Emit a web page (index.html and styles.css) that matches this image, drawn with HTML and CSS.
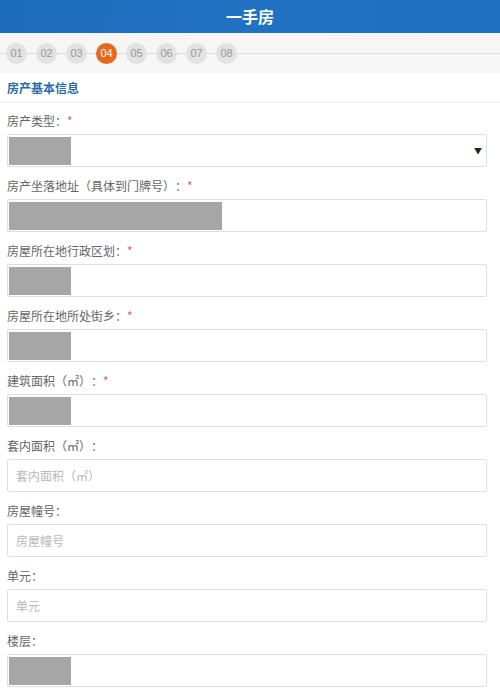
FILE: index.html
```html
<!DOCTYPE html>
<html lang="zh-CN">
<head>
    <meta charset="UTF-8">
    <meta name="viewport" content="width=device-width, initial-scale=1.0">
    <title>一手房</title>
    <link rel="stylesheet" href="styles.css">
</head>
<body>
    <header class="top-bar">一手房</header>

    <div class="steps">
        <span class="step">01</span>
        <span class="step">02</span>
        <span class="step">03</span>
        <span class="step active">04</span>
        <span class="step">05</span>
        <span class="step">06</span>
        <span class="step">07</span>
        <span class="step">08</span>
    </div>

    <div class="section-title">房产基本信息</div>

    <form class="form">
        <div class="field">
            <label>房产类型：<em>*</em></label>
            <div class="box select"><span class="mask"></span><span class="arrow">▼</span></div>
        </div>
        <div class="field">
            <label>房产坐落地址（具体到门牌号）：<em>*</em></label>
            <div class="box"><span class="mask wide"></span></div>
        </div>
        <div class="field">
            <label>房屋所在地行政区划：<em>*</em></label>
            <div class="box"><span class="mask"></span></div>
        </div>
        <div class="field">
            <label>房屋所在地所处街乡：<em>*</em></label>
            <div class="box"><span class="mask"></span></div>
        </div>
        <div class="field">
            <label>建筑面积（㎡）：<em>*</em></label>
            <div class="box"><span class="mask"></span></div>
        </div>
        <div class="field">
            <label>套内面积（㎡）：</label>
            <input class="box" type="text" placeholder="套内面积（㎡）">
        </div>
        <div class="field">
            <label>房屋幢号：</label>
            <input class="box" type="text" placeholder="房屋幢号">
        </div>
        <div class="field">
            <label>单元：</label>
            <input class="box" type="text" placeholder="单元">
        </div>
        <div class="field">
            <label>楼层：</label>
            <div class="box"><span class="mask"></span></div>
        </div>
    </form>
</body>
</html>
```

FILE: styles.css
```css
/* Global */
body {
    margin: 0;
    font-family: "Noto Sans CJK SC", "Noto Sans", sans-serif;
    font-size: 12px;
    color: #666;
    background: #fff;
    text-spacing-trim: space-all;
}

/* Header */
.top-bar {
    height: 33px;
    line-height: 33px;
    text-align: center;
    font-size: 16px;
    font-weight: bold;
    color: #fff;
    background: linear-gradient(100deg, #1d6bbb, #2272c3 50%, #1f6fc0);
}

/* Steps */
.steps {
    height: 40px;
    display: flex;
    align-items: center;
    gap: 9px;
    padding-left: 6px;
    background: #f6f6f6 linear-gradient(#dcdcdc, #dcdcdc) no-repeat 0 20px / 100% 1px;
}

.step {
    width: 21px;
    height: 21px;
    line-height: 21px;
    border-radius: 50%;
    background: #e2e2e2;
    color: #999;
    font-family: "Liberation Sans", Arial, sans-serif;
    font-size: 11px;
    text-align: center;
}

.step.active {
    background: #e8681c;
    color: #fff;
}

/* Section */
.section-title {
    height: 29px;
    line-height: 30px;
    padding-left: 7px;
    font-weight: bold;
    color: #2b6cae;
    border-bottom: 1px solid #ececec;
}

/* Form */
.form {
    padding: 8px 13px 0 7px;
}

.field {
    margin-bottom: 9px;
}

.field label {
    display: block;
    height: 20px;
    line-height: 20px;
    margin-bottom: 3px;
    color: #666;
}

.field label em {
    font-style: normal;
    color: #e06060;
}

.box {
    box-sizing: border-box;
    display: flex;
    align-items: center;
    width: 480px;
    height: 33px;
    margin: 0;
    padding: 1px;
    border: 1px solid #dedede;
    border-radius: 2px;
    background: #fff;
    font-family: inherit;
    font-size: 12px;
    color: #555;
}

input.box {
    display: block;
    padding: 0 8px;
    outline: none;
}

input.box::placeholder {
    color: #b8b8b8;
}

.mask {
    width: 62px;
    height: 28px;
    background: #a6a6a6;
}

.mask.wide {
    width: 213px;
}

.select {
    justify-content: space-between;
}

.arrow {
    margin-right: 3px;
    font-size: 8px;
    color: #222;
}
```
